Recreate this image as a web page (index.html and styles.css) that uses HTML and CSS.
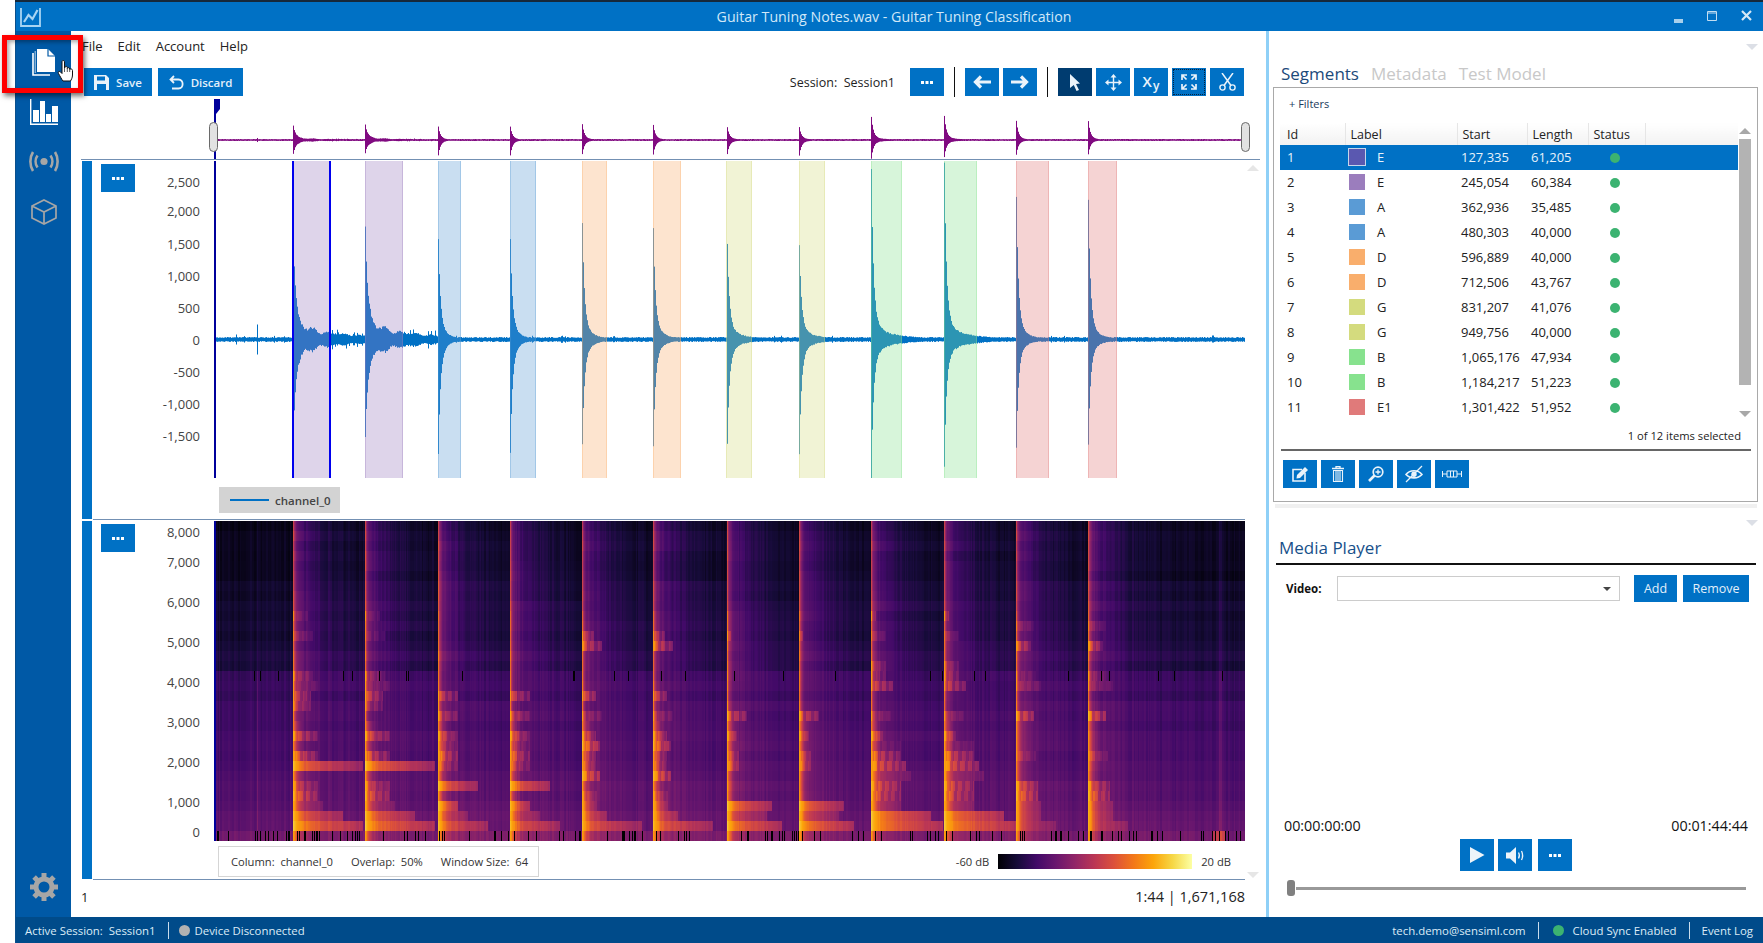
FILE: index.html
```html
<!DOCTYPE html>
<html lang="en">
<head>
<meta charset="utf-8">
<title>Guitar Tuning Notes.wav - Guitar Tuning Classification</title>
<link rel="stylesheet" href="styles.css">
</head>
<body>
<div class="topstrip"></div>
<div class="window">
  <header class="titlebar">
    <svg class="logo" width="21" height="20" viewBox="0 0 21 20"><path d="M1 1V19H20V1" fill="none" stroke="#a8d4f2" stroke-width="1.800"/><path d="M4 15L8.500 8L12.500 12L17.500 3" fill="none" stroke="#a8d4f2" stroke-width="2.200"/></svg>
    <div class="title">Guitar Tuning Notes.wav - Guitar Tuning Classification</div>
    <div class="winbtns">
      <svg width="9" height="4" viewBox="0 0 9 4"><rect width="9" height="4" fill="#a9d0ec"/></svg>
      <svg width="10" height="10" viewBox="0 0 10 10"><path d="M.5 .5H9.500V9.500H.5Z M.5 2H9.500" fill="none" stroke="#c3def2" stroke-width="1"/></svg>
      <svg width="11" height="11" viewBox="0 0 11 11"><path d="M1 1L10 10M10 1L1 10" stroke="#d5e8f6" stroke-width="2.200"/></svg>
    </div>
  </header>

  <div class="middle">
    <nav class="sidebar">
      <svg class="nav-file" width="24" height="28" viewBox="0 0 24 28"><path d="M1 5V27H18" fill="none" stroke="#fff" stroke-width="1.600"/><path d="M5 1H16L23 8V24H5Z" fill="#fff"/><path d="M16 1V8H23" fill="none" stroke="#0059a6" stroke-width="1.200"/><path d="M3.200 3V25" stroke="#bcd7ee" stroke-width="1"/></svg>
      <svg class="nav-chart" width="28" height="26" viewBox="0 0 28 26"><path d="M.7 0V25.200H28" fill="none" stroke="#fff" stroke-width="1.400"/><path d="M3 11H9V23H3ZM10 2H15V23H10ZM16 15H21V23H16ZM22 7H28V23H22Z" fill="#fff"/></svg>
      <svg class="nav-signal" width="30" height="23" viewBox="0 0 30 23"><circle cx="15" cy="11.500" r="3.600" fill="#a6a6a6"/><path d="M8.500 5.500C6 9 6 14 8.500 17.500M21.500 5.500C24 9 24 14 21.500 17.500M4 2C.5 7.500 .5 15.500 4 21M26 2C29.500 7.500 29.500 15.500 26 21" fill="none" stroke="#a6a6a6" stroke-width="2.600"/></svg>
      <svg class="nav-cube" width="26" height="26" viewBox="0 0 26 26"><path d="M13 1L25 7V19L13 25L1 19V7ZM1 7L13 13L25 7M13 13V25" fill="none" stroke="#a6a6a6" stroke-width="1.700"/></svg>
      <svg class="nav-gear" width="28" height="28" viewBox="-14 -14 28 28">
        <circle r="8" fill="none" stroke="#a6a6a6" stroke-width="5"/>
        <g fill="#a6a6a6"><rect x="-2.500" y="-14" width="5" height="5"/><rect x="-2.500" y="-14" width="5" height="5" transform="rotate(45)"/><rect x="-2.500" y="-14" width="5" height="5" transform="rotate(90)"/><rect x="-2.500" y="-14" width="5" height="5" transform="rotate(135)"/><rect x="-2.500" y="-14" width="5" height="5" transform="rotate(180)"/><rect x="-2.500" y="-14" width="5" height="5" transform="rotate(225)"/><rect x="-2.500" y="-14" width="5" height="5" transform="rotate(270)"/><rect x="-2.500" y="-14" width="5" height="5" transform="rotate(315)"/></g>
      </svg>
    </nav>

    <main class="main">
      <div class="menu"><span>File</span><span>Edit</span><span>Account</span><span>Help</span></div>

      <div class="toolbar">
        <button class="btn btn-text"><svg width="15" height="15" viewBox="0 0 15 15"><path fill-rule="evenodd" d="M0 0H12L15 3V15H0ZM3 1.500V5.500H11V1.500ZM3 9V15H12V9Z" fill="#eaf3fa"/></svg>Save</button>
        <button class="btn btn-text btn-discard"><svg width="15" height="15" viewBox="0 0 15 15"><path d="M5 1L1.500 4.500L5 8M1.500 4.500H9.500C15 4.500 15 13.500 9.500 13.500H3" fill="none" stroke="#eaf3fa" stroke-width="1.800"/></svg>Discard</button>
        <div class="session">Session:&nbsp; Session1</div>
        <button class="btn"><svg width="12" height="3" viewBox="0 0 12 3"><path d="M0 0H3V3H0ZM4.500 0H7.500V3H4.500ZM9 0H12V3H9Z" fill="#fff"/></svg></button>
        <div class="vsep"></div>
        <button class="btn"><svg width="18" height="14" viewBox="0 0 18 14"><path d="M8 1.500L2.500 7L8 12.500M3 7H18" fill="none" stroke="#eaf3fa" stroke-width="3.200"/></svg></button>
        <button class="btn"><svg width="18" height="14" viewBox="0 0 18 14"><path d="M10 1.500L15.500 7L10 12.500M15 7H0" fill="none" stroke="#eaf3fa" stroke-width="3.200"/></svg></button>
        <div class="vsep"></div>
        <button class="btn btn-active"><svg width="10" height="17" viewBox="0 0 10 17"><path d="M0 0L10 9.500L6 10L9 16L6.500 17L3.800 11L0 14Z" fill="#eaf3fa"/></svg></button>
        <button class="btn"><svg width="17" height="17" viewBox="0 0 17 17"><path d="M8.500 2V15M2 8.500H15" stroke="#eaf3fa" stroke-width="1.400"/><path d="M8.500 0L11.500 3.500H5.500ZM8.500 17L11.500 13.500H5.500ZM0 8.500L3.500 5.500V11.500ZM17 8.500L13.500 5.500V11.500Z" fill="#eaf3fa"/></svg></button>
        <button class="btn btn-xy"><span class="xy-x">X</span><span class="xy-y">y</span></button>
        <button class="btn btn-focus"><svg width="16" height="16" viewBox="0 0 16 16"><path d="M1 6V1H6M1 1L5.500 5.500M10 1H15V6M15 1L10.500 5.500M1 10V15H6M1 15L5.500 10.500M15 10V15H10M15 15L10.500 10.500" fill="none" stroke="#eaf3fa" stroke-width="1.700"/></svg></button>
        <button class="btn"><svg width="17" height="18" viewBox="0 0 17 18"><circle cx="3.500" cy="14.500" r="2.600" fill="none" stroke="#eaf3fa" stroke-width="1.400"/><circle cx="13.500" cy="14.500" r="2.600" fill="none" stroke="#eaf3fa" stroke-width="1.400"/><path d="M5 12.500L14 0M12 12.500L3 0" stroke="#eaf3fa" stroke-width="1.500"/></svg></button>
      </div>

      <div class="overview">
        <canvas id="overview" class="overview-canvas" width="1031" height="62"></canvas>
        <div class="handle handle-left"></div>
        <div class="handle handle-right"></div>
      </div>

      <section class="chart chart-wave">
        <div class="chart-bar"></div>
        <div class="chart-body">
          <div class="chart-side">
            <div class="chart-btncol"><button class="btn"><svg width="12" height="3" viewBox="0 0 12 3"><path d="M0 0H3V3H0ZM4.500 0H7.500V3H4.500ZM9 0H12V3H9Z" fill="#fff"/></svg></button></div>
            <div class="axis axis-wave">
              <div class="tick">2,500</div><div class="tick">2,000</div><div class="tick">1,500</div><div class="tick">1,000</div><div class="tick">500</div><div class="tick">0</div><div class="tick">-500</div><div class="tick">-1,000</div><div class="tick">-1,500</div>
            </div>
          </div>
          <div class="plot">
            <canvas id="wave" class="wave-canvas" width="1031" height="317"></canvas>
            <div class="legend"><span class="legend-line"></span>channel_0</div>
          </div>
        </div>
      </section>

      <section class="chart chart-spec">
        <div class="chart-bar"></div>
        <div class="chart-body">
          <div class="chart-side">
            <div class="chart-btncol"><button class="btn"><svg width="12" height="3" viewBox="0 0 12 3"><path d="M0 0H3V3H0ZM4.500 0H7.500V3H4.500ZM9 0H12V3H9Z" fill="#fff"/></svg></button></div>
            <div class="axis axis-spec">
              <div class="tick">8,000</div><div class="tick">7,000</div><div class="tick">6,000</div><div class="tick">5,000</div><div class="tick">4,000</div><div class="tick">3,000</div><div class="tick">2,000</div><div class="tick">1,000</div><div class="tick">0</div>
            </div>
          </div>
          <div class="plot">
            <canvas id="spec" class="spec-canvas" width="1031" height="320"></canvas>
            <div class="spec-foot">
              <div class="infobox"><span>Column:&nbsp; channel_0</span><span>Overlap:&nbsp; 50%</span><span>Window Size:&nbsp; 64</span></div>
              <div class="scale"><span>-60 dB</span><div class="scale-bar"></div><span>20 dB</span></div>
            </div>
          </div>
        </div>
      </section>

      <footer class="main-foot"><span>1</span><span>1:44 | 1,671,168</span></footer>
      <div class="tri tri-up tri-chart-top"></div>
      <div class="tri tri-down tri-chart-bottom"></div>
    </main>

    <div class="vsplit"></div>

    <aside class="right">
      <div class="tri tri-down tri-right-top"></div>
      <div class="tabs"><span class="tab-on">Segments</span><span>Metadata</span><span>Test Model</span></div>
      <div class="box">
        <div class="filters">+ Filters</div>
        <div class="table-wrap">
          <table class="segs">
            <thead><tr><th>Id</th><th>Label</th><th>Start</th><th>Length</th><th>Status</th><th></th></tr></thead>
            <tbody>
              <tr class="selected"><td>1</td><td><span class="sw sw-e1"></span>E</td><td>127,335</td><td>61,205</td><td><span class="dot"></span></td><td></td></tr>
              <tr><td>2</td><td><span class="sw sw-e"></span>E</td><td>245,054</td><td>60,384</td><td><span class="dot"></span></td><td></td></tr>
              <tr><td>3</td><td><span class="sw sw-a"></span>A</td><td>362,936</td><td>35,485</td><td><span class="dot"></span></td><td></td></tr>
              <tr><td>4</td><td><span class="sw sw-a"></span>A</td><td>480,303</td><td>40,000</td><td><span class="dot"></span></td><td></td></tr>
              <tr><td>5</td><td><span class="sw sw-d"></span>D</td><td>596,889</td><td>40,000</td><td><span class="dot"></span></td><td></td></tr>
              <tr><td>6</td><td><span class="sw sw-d"></span>D</td><td>712,506</td><td>43,767</td><td><span class="dot"></span></td><td></td></tr>
              <tr><td>7</td><td><span class="sw sw-g"></span>G</td><td>831,207</td><td>41,076</td><td><span class="dot"></span></td><td></td></tr>
              <tr><td>8</td><td><span class="sw sw-g"></span>G</td><td>949,756</td><td>40,000</td><td><span class="dot"></span></td><td></td></tr>
              <tr><td>9</td><td><span class="sw sw-b"></span>B</td><td>1,065,176</td><td>47,934</td><td><span class="dot"></span></td><td></td></tr>
              <tr><td>10</td><td><span class="sw sw-b"></span>B</td><td>1,184,217</td><td>51,223</td><td><span class="dot"></span></td><td></td></tr>
              <tr><td>11</td><td><span class="sw sw-r"></span>E1</td><td>1,301,422</td><td>51,952</td><td><span class="dot"></span></td><td></td></tr>
            </tbody>
          </table>
          <div class="vscroll"><div class="sb-up"></div><div class="sb-thumb"></div><div class="sb-down"></div></div>
        </div>
        <div class="count">1 of 12 items selected</div>
        <div class="rule-grey"></div>
        <div class="actions">
          <button class="btn"><svg width="16" height="15" viewBox="0 0 16 15"><path d="M10 2.500H1V14H13V6" fill="none" stroke="#eaf3fa" stroke-width="1.600"/><path d="M5 8L13 0L16 3L8 11L4.500 11.500Z" fill="#eaf3fa"/></svg></button>
          <button class="btn"><svg width="12" height="16" viewBox="0 0 12 16"><path d="M0 2.500H12M4 2.500V.7H8V2.500" fill="none" stroke="#eaf3fa" stroke-width="1.300"/><path d="M1.500 4.500H10.500V15.500H1.500ZM4 4.500V15.500M6 4.500V15.500M8 4.500V15.500" fill="none" stroke="#eaf3fa" stroke-width="1.100"/></svg></button>
          <button class="btn"><svg width="16" height="16" viewBox="0 0 16 16"><circle cx="10" cy="6" r="4.800" fill="none" stroke="#eaf3fa" stroke-width="1.700"/><path d="M6.500 9.500L1 15" stroke="#eaf3fa" stroke-width="2.600"/><path d="M10 3.500V8.500M7.500 6H12.500" stroke="#eaf3fa" stroke-width="1.300"/></svg></button>
          <button class="btn"><svg width="18" height="18" viewBox="0 0 18 18"><path d="M1 9.500C5 4.500 13 4.500 17 9.500C13 14 5 14 1 9.500Z" fill="none" stroke="#eaf3fa" stroke-width="1.600"/><circle cx="9" cy="9.300" r="2.700" fill="#eaf3fa"/><path d="M1 17L17 1" stroke="#eaf3fa" stroke-width="1.300"/></svg></button>
          <button class="btn"><svg width="20" height="8" viewBox="0 0 20 8"><path d="M.5 1V7M.5 4H5M5 1H15V7H5ZM8.500 1V7M11.500 1V7M15 4H19.500M19.500 1V7" fill="none" stroke="#eaf3fa" stroke-width="1"/></svg></button>
        </div>
      </div>
      <div class="hsplit"></div>

      <div class="media">
        <div class="tri tri-down tri-media"></div>
        <div class="media-title">Media Player</div>
        <div class="rule-black"></div>
        <div class="video-row">
          <label class="video-label">Video:</label>
          <div class="combo"><span class="combo-arrow"></span></div>
          <button class="btn btn-add">Add</button>
          <button class="btn btn-remove">Remove</button>
        </div>
        <div class="times"><span>00:00:00:00</span><span>00:01:44:44</span></div>
        <div class="controls">
          <button class="btn btn-tall"><svg width="15" height="16" viewBox="0 0 15 16"><path d="M0 0L14.500 8L0 16Z" fill="#eef4f9"/></svg></button>
          <button class="btn btn-tall"><svg width="19" height="17" viewBox="0 0 19 17"><path d="M0 5.500H4L10 0V17L4 11.500H0Z" fill="#eef4f9"/><path d="M12.500 5.500C13.700 7.500 13.700 9.500 12.500 11.500M15.500 4C17 7 17 10 15.500 13" fill="none" stroke="#eef4f9" stroke-width="1.300"/></svg></button>
          <button class="btn btn-tall btn-more"><svg width="12" height="3" viewBox="0 0 12 3"><path d="M0 0H3V3H0ZM4.500 0H7.500V3H4.500ZM9 0H12V3H9Z" fill="#fff"/></svg></button>
        </div>
        <div class="slider"><div class="slider-thumb"></div><div class="slider-track"></div></div>
      </div>
    </aside>
  </div>

  <footer class="statusbar">
    <span>Active Session:&nbsp; Session1</span>
    <i class="sb-sep"></i>
    <i class="sb-dot sb-dot-grey"></i>
    <span>Device Disconnected</span>
    <span class="sb-right">tech.demo@sensiml.com</span>
    <i class="sb-sep"></i>
    <i class="sb-dot sb-dot-green"></i>
    <span>Cloud Sync Enabled</span>
    <i class="sb-sep sb-sep-last"></i>
    <span>Event Log</span>
  </footer>
</div>

<div class="callout"></div>
<svg class="hand" width="17" height="22" viewBox="0 0 17 22"><path d="M5 1.500C5 .3 7.500 .3 7.500 1.500V8L8 7.300C8.500 6 10 6 10.300 7.500V8.500C10.800 7.200 12.500 7.500 12.700 9V9.500C13.300 8.500 15.500 8.800 15.500 10.500V15C15.500 18 14 20 13.500 21H6C5 20 3 16 1.500 13.500C.7 12 2 10.800 3.200 11.700L5 13.500Z" fill="#fff" stroke="#111" stroke-width="1"/><path d="M7.500 8V12M10.300 8.500V12M12.700 9.500V12" stroke="#111" stroke-width=".7"/></svg>
<script src="app.js"></script>
</body>
</html>
```

FILE: styles.css
```css
* { box-sizing: border-box; }
html, body { margin: 0; height: 943px; overflow: hidden; background: #fff; }
body { position: relative; font-family: "Open Sans", "Noto Sans", sans-serif; font-size: 13px; color: #1c1c1c; }
button { font-family: inherit; border: 0; padding: 0; margin: 0; }
canvas { display: block; }

.topstrip { height: 2px; margin-left: 15px; background: #16283a; }
.window { margin-left: 15px; height: 941px; display: flex; flex-direction: column; border-left: 1px solid #0a4f8c; }

.titlebar { height: 29px; flex: none; background: #0071c5; display: flex; align-items: center; padding-left: 4px; position: relative; }
.logo { flex: none; }
.title { flex: 1; text-align: center; padding-left: 84px; font-size: 14.200px; color: #d2e8f8; }
.winbtns { flex: none; width: 100px; display: flex; justify-content: flex-end; align-items: center; gap: 24px; padding-right: 11px; }
.winbtns svg:first-child { margin-top: 8px; }
.winbtns svg:nth-child(2) { margin-top: -2px; }
.winbtns svg:last-child { margin-top: -2px; }

.middle { flex: 1; display: flex; min-height: 0; }
.sidebar { width: 55px; flex: none; background: #0059a6; display: flex; flex-direction: column; align-items: center; }
.nav-file { margin-top: 17px; flex: none; }
.nav-chart { margin-top: 23px; flex: none; }
.nav-signal { margin-top: 25px; flex: none; }
.nav-cube { margin-top: 26px; flex: none; }
.nav-gear { margin-top: auto; margin-bottom: 16px; flex: none; }

.main { flex: 1; min-width: 0; position: relative; padding-left: 10px; display: flex; flex-direction: column; background: #fff; }
.menu { height: 37px; flex: none; padding: 5px 0 0 1px; display: flex; gap: 15px; line-height: 20px; color: #222; }

.btn { display: flex; align-items: center; justify-content: center; width: 34px; height: 28px; flex: none; background: #0071c5; color: #e4f0fa; }
.toolbar { height: 28px; flex: none; margin: 0 22px 0 3px; display: flex; align-items: center; gap: 4px; }
.btn-text { width: 68px; gap: 7px; font-size: 11.500px; font-weight: 600; }
.btn-discard { width: 85px; margin-left: 2px; }
.session { margin-left: auto; margin-right: 11px; font-size: 12.500px; color: #222; }
.vsep { width: 1px; height: 30px; background: #111; margin: 0 6px; }
.btn-active { background: #003c70; }
.btn-xy { align-items: baseline; padding-top: 3px; color: #eaf3fa; font-weight: 600; }
.xy-x { font-size: 15px; }
.xy-y { font-size: 12px; margin-left: 1px; position: relative; top: 3px; }
.btn-focus { outline: 1px dotted #06233f; outline-offset: -2px; }

.overview { height: 64px; flex: none; position: relative; margin-right: 6px; border-bottom: 1px solid #7390b3; padding-left: 133px; }
.overview-canvas { margin-top: 1px; }
.handle { position: absolute; top: 26px; width: 9px; height: 30px; background: #e2e2e2; border: 1px solid #6a6a6a; border-radius: 5px; }
.handle-left { left: 128px; }
.handle-right { left: 1160px; }

.chart { display: flex; flex: none; }
.chart-bar { width: 10px; height: 358px; margin-left: 1px; background: #0071c5; flex: none; }
.chart-body { width: 1152px; margin-left: 1px; display: flex; flex: none; }
.chart-side { width: 121px; flex: none; display: flex; }
.chart-btncol { width: 50px; flex: none; padding-left: 8px; }
.axis { flex: 1; display: flex; flex-direction: column; align-items: flex-end; padding-right: 14px; font-size: 13px; color: #444; }
.tick { line-height: 20px; height: 20px; }
.plot { width: 1031px; flex: none; }

.chart-wave { height: 359px; }
.chart-wave .chart-bar { margin-top: 1px; }
.chart-wave .chart-btncol { padding-top: 4px; }
.axis-wave { padding-top: 12px; }
.axis-wave .tick { margin-top: 12px; }
.axis-wave .tick:first-child { margin-top: 0; }
.axis-wave .tick:nth-child(2) { margin-top: 9px; }
.axis-wave .tick:nth-child(3) { margin-top: 13px; }
.wave-canvas { margin-top: 1px; }
.legend { margin: 9px 0 0 5px; width: 121px; height: 26px; background: #d3d3d3; display: flex; align-items: center; padding-left: 11px; gap: 6px; font-size: 11.500px; font-weight: 600; color: #444; }
.legend-line { width: 39px; height: 2px; background: #0071c5; flex: none; }

.chart-spec { height: 361px; }
.chart-spec .chart-bar { margin-top: 2px; }
.chart-spec .chart-body { border-top: 1px solid #7390b3; border-bottom: 1px solid #7390b3; }
.chart-spec .chart-btncol { padding-top: 4px; }
.axis-spec { padding-top: 2px; }
.axis-spec .tick { margin-top: 20px; }
.axis-spec .tick:first-child { margin-top: 0; }
.axis-spec .tick:nth-child(2), .axis-spec .tick:last-child { margin-top: 10px; }
.spec-canvas { margin-top: 1px; }
.spec-foot { display: flex; align-items: flex-start; margin-top: 5px; padding: 0 14px 0 4px; justify-content: space-between; }
.infobox { width: 321px; height: 31px; border: 1px solid #d5d5d5; display: flex; align-items: center; padding-left: 12px; gap: 18px; font-size: 11.200px; color: #333; white-space: nowrap; }
.scale { display: flex; align-items: center; gap: 9px; margin-top: 8px; font-size: 11.200px; color: #333; }
.scale-bar { width: 194px; height: 15px; background: linear-gradient(to right, #000004, #160b39, #420a68, #6a176e, #932667, #bc3754, #dd513a, #f37819, #fca50a, #f6d746, #fcffa4); }

.main-foot { flex: 1; display: flex; justify-content: space-between; padding: 7px 21px 0 0; font-size: 14.500px; line-height: 20px; color: #222; }
.main-foot span:first-child { font-size: 13px; }

.tri { position: absolute; width: 0; height: 0; border-left: 6px solid transparent; border-right: 6px solid transparent; }
.tri-up { border-bottom: 6px solid #e6e6e6; }
.tri-down { border-top: 6px solid #dcdfe6; }
.tri-chart-top { left: 1176px; top: 134px; }
.tri-chart-bottom { left: 1176px; top: 841px; border-top-color: #e6e6e6; }

.vsplit { width: 3px; flex: none; background: #8fd0f7; }
.right { width: 494px; flex: none; position: relative; display: flex; flex-direction: column; background: #fff; }
.tri-right-top { left: 477px; top: 13px; }
.tabs { padding: 31px 0 0 12px; height: 54px; flex: none; margin-bottom: 2px; display: flex; gap: 12px; font-size: 17px; line-height: 23px; color: #c8c8c8; }
.tab-on { color: #1c4a7a; }

.box { margin: 0 5px 0 4px; height: 415px; flex: none; border: 1px solid #a9a9a9; padding: 0 6px; }
.filters { height: 35px; padding: 8px 0 0 9px; font-size: 11px; line-height: 15px; color: #1a3a5c; }
.table-wrap { height: 297px; display: flex; gap: 1px; }
.segs { width: 458px; flex: none; table-layout: fixed; border-collapse: collapse; font-size: 13px; }
.segs th { height: 22px; padding: 0 0 0 5px; font-weight: 400; text-align: left; color: #222; background: linear-gradient(#fff, #f2f2f2); border-right: 1px solid #e6e6e6; font-size: 12.500px; }
.segs th:nth-child(1) { width: 65px; padding-left: 7px; }
.segs th:nth-child(2) { width: 112px; }
.segs th:nth-child(3) { width: 70px; }
.segs th:nth-child(4) { width: 61px; }
.segs th:nth-child(5) { width: 57px; }
.segs th:last-child { border-right: 0; }
.segs td { height: 25px; padding: 0 0 2px 4px; white-space: nowrap; color: #222; }
.segs td:first-child { padding-left: 7px; }
.segs td:nth-child(2) { padding-left: 4px; }
.segs td:nth-child(5) { padding-left: 22px; }
.selected td { background: #0071c5; color: #e8f2fa; }
.sw { display: inline-block; width: 16px; height: 16px; margin-right: 12px; vertical-align: -3px; }
.sw-e1 { background: #5a58b0; outline: 1px solid #c6d6ea; }
.sw-e { background: #9b7dbd; }
.sw-a { background: #5a9bd5; }
.sw-d { background: #f9ae6c; }
.sw-g { background: #d4db7e; }
.sw-b { background: #87e28e; }
.sw-r { background: #e07a7a; }
.dot { display: inline-block; width: 10px; height: 10px; border-radius: 50%; background: #3cb371; vertical-align: middle; }
.vscroll { width: 12px; flex: none; display: flex; flex-direction: column; padding: 5px 0 3px; }
.sb-up { border-left: 6px solid transparent; border-right: 6px solid transparent; border-bottom: 6px solid #a8a8a8; }
.sb-thumb { height: 246px; margin-top: 5px; background: #b3b3b3; }
.sb-down { margin-top: auto; border-left: 6px solid transparent; border-right: 6px solid transparent; border-top: 6px solid #a8a8a8; }
.count { margin-top: 6px; padding-right: 10px; height: 20px; text-align: right; font-size: 11.200px; line-height: 20px; color: #222; }
.rule-grey { margin: 3px 0 0 1px; height: 2px; background: #666; }
.actions { margin: 9px 0 0 3px; display: flex; gap: 4px; }

.hsplit { margin: 2px 6px 0 6px; height: 4px; flex: none; background: #f0f0f0; }

.media { flex: 1; position: relative; min-height: 0; padding: 28px 7px 21px; display: flex; flex-direction: column; }
.tri-media { left: 477px; top: 12px; }
.media-title { padding-left: 3px; font-size: 17px; line-height: 24px; color: #17508a; }
.rule-black { margin-top: 3px; height: 2px; background: #111; flex: none; }
.video-row { margin-top: 10px; height: 27px; display: flex; align-items: center; flex: none; }
.video-label { margin-left: 10px; width: 51px; font-size: 11.500px; font-weight: 700; color: #111; }
.combo { width: 283px; height: 25px; border: 1px solid #ccc; position: relative; display: flex; align-items: center; justify-content: flex-end; padding-right: 8px; }
.combo-arrow { border-left: 4px solid transparent; border-right: 4px solid transparent; border-top: 4px solid #444; }
.btn-add { width: 43px; height: 27px; margin-left: 14px; font-size: 12.500px; font-weight: 500; }
.btn-remove { width: 66px; height: 27px; margin-left: 6px; font-size: 12.500px; font-weight: 500; }
.times { margin-top: auto; height: 20px; padding: 0 8px 0 8px; display: flex; justify-content: space-between; font-size: 14.300px; line-height: 20px; color: #111; flex: none; }
.controls { margin: 3px 0 0 184px; display: flex; gap: 4px; flex: none; }
.btn-tall { height: 32px; }
.btn-more { margin-left: 2px; }
.slider { margin: 9px 10px 0 11px; height: 16px; display: flex; align-items: center; gap: 1px; flex: none; }
.slider-thumb { width: 8px; height: 16px; background: #808080; border-radius: 3px; flex: none; }
.slider-track { flex: 1; height: 3px; background: #999; }

.statusbar { height: 26px; flex: none; background: #004b8a; color: #dcebf7; font-size: 11.400px; display: flex; align-items: center; padding: 0 10px 0 9px; white-space: nowrap; }
.sb-sep { width: 1px; height: 17px; background: #c8dcec; margin: 0 8px 0 12px; flex: none; }
.sb-sep-last { margin-right: 12px; }
.sb-dot { width: 11px; height: 11px; border-radius: 50%; margin: 0 5px 0 2px; flex: none; }
.sb-dot-grey { background: #b2b2b2; }
.sb-dot-green { background: #3cb371; margin: 0 9px 0 6px; }
.sb-right { margin-left: auto; }

.callout { position: absolute; left: 2px; top: 35px; width: 81px; height: 58px; border: 5px solid #f00; box-shadow: 2px 3px 5px rgba(0,0,0,.55), inset 2px 2px 4px rgba(0,0,0,.35); }
.hand { position: absolute; left: 57px; top: 60px; }
```

FILE: app.js
```js
(function () {
  function rng(seed) {
    return function () {
      seed |= 0; seed = seed + 0x6D2B79F5 | 0;
      var t = Math.imul(seed ^ seed >>> 15, 1 | seed);
      t = t + Math.imul(t ^ t >>> 7, 61 | t) ^ t;
      return ((t ^ t >>> 14) >>> 0) / 4294967296;
    };
  }
  var X0 = 214, W = 1031;
  var NOTES = [
    { x: 293, up: 91, dn: 89, t: 'E', body: 15, tau: 42, tail: 5 },
    { x: 365, up: 99, dn: 82, t: 'E', body: 16, tau: 42, tail: 5 },
    { x: 438, up: 94, dn: 108, t: 'A', body: 6, tau: 14, tail: 1 },
    { x: 510, up: 94, dn: 108, t: 'A', body: 6, tau: 14, tail: 1 },
    { x: 582, up: 110, dn: 98, t: 'D', body: 7, tau: 16, tail: 1 },
    { x: 653, up: 104, dn: 100, t: 'D', body: 7, tau: 16, tail: 1 },
    { x: 727, up: 88, dn: 97, t: 'G', body: 7, tau: 24, tail: 1 },
    { x: 799, up: 88, dn: 108, t: 'G', body: 7, tau: 24, tail: 1 },
    { x: 871, up: 161, dn: 128, t: 'B', body: 10, tau: 32, tail: 1 },
    { x: 944, up: 168, dn: 117, t: 'B', body: 10, tau: 32, tail: 1 },
    { x: 1016, up: 136, dn: 103, t: 'R', body: 6, tau: 18, tail: 1 },
    { x: 1088, up: 134, dn: 100, t: 'R', body: 6, tau: 18, tail: 1 }
  ];
  var SEGS = [
    [293, 330, '155,125,190'], [365, 403, '155,125,190'],
    [438, 461, '90,155,213'], [510, 536, '90,155,213'],
    [582, 607, '249,174,108'], [653, 681, '249,174,108'],
    [726, 752, '212,219,126'], [799, 825, '212,219,126'],
    [871, 902, '135,226,142'], [944, 977, '135,226,142'],
    [1016, 1049, '224,122,122'], [1088, 1117, '224,122,122']
  ];
  function noteAt(x) {
    var n = null, i = 0;
    for (i = 0; i < NOTES.length; i++) { if (x >= NOTES[i].x) n = NOTES[i]; }
    return n;
  }
  function sample(x, r) {
    var u = 1.6 + r() * 0.9, d = 1.6 + r() * 0.9, n = noteAt(x);
    if (x === 236) { u = 5; d = 5; }
    if (x === 257) { u = 15; d = 15; }
    if (x === 1212 || x === 1213) { u = 4; d = 3; }
    if (r() < 0.04) { u += 1.5; d += 1; }
    if (n) {
      var dx = x - n.x;
      var s = 0.86 * Math.exp(-dx / 2) + 0.14 * Math.exp(-dx / 5.5);
      var wav = n.t === 'E' ? 1 + 0.22 * Math.sin(dx * 0.4) : 1;
      var bu = n.body * Math.exp(-dx / n.tau) * wav * (0.85 + 0.25 * r());
      var bd = n.body * Math.exp(-dx / n.tau) * wav * (0.85 + 0.25 * r());
      u = Math.max(u, n.up * s + bu);
      d = Math.max(d, n.dn * s + bd);
      if (n.tail > 1 && dx > 38 && dx < 75) {
        u += 0.8; d += 0.8;
        if (r() < 0.3) { u += r() * n.tail; d += r() * n.tail; }
      }
    }
    return [u, d];
  }

  // main waveform
  var wave = document.getElementById('wave').getContext('2d');
  var r1 = rng(11), c1 = 178.5, i;
  wave.fillStyle = '#0071c5';
  for (i = 2; i < W; i++) {
    var s1 = sample(i + X0, r1);
    wave.fillRect(i, c1 - s1[0], 1, s1[0] + s1[1]);
  }
  SEGS.forEach(function (s) {
    var a = s[0] - X0, b = s[1] - X0;
    wave.fillStyle = 'rgba(' + s[2] + ',.33)';
    wave.fillRect(a, 0, b - a, 317);
    wave.fillStyle = 'rgba(' + s[2] + ',.35)';
    wave.fillRect(a, 0, 1, 317);
    wave.fillRect(b - 1, 0, 1, 317);
  });
  wave.fillStyle = '#00009b';
  wave.fillRect(0, 0, 2, 317);
  wave.fillStyle = '#0000ee';
  wave.fillRect(292 - X0, 0, 2, 317);
  wave.fillRect(329 - X0, 0, 2, 317);

  // overview
  var ov = document.getElementById('overview').getContext('2d');
  var r2 = rng(23), c2 = 43;
  ov.fillStyle = '#800a80';
  for (i = 2; i < W; i++) {
    var s2 = sample(i + X0, r2);
    var up = Math.max(0.7 + r2() * 0.3, s2[0] * 0.135), dn = Math.max(0.7 + r2() * 0.3, s2[1] * 0.135);
    ov.fillRect(i, c2 - up, 1, up + dn);
  }
  ov.fillStyle = '#00009b';
  ov.fillRect(0, 2, 2, 60);
  ov.beginPath();
  ov.moveTo(0, 2); ov.lineTo(6, 2); ov.lineTo(6, 12); ov.lineTo(2, 17); ov.lineTo(0, 17);
  ov.closePath(); ov.fill();

  // spectrogram
  var STOPS = [[0, 0, 4], [22, 11, 57], [66, 10, 104], [106, 23, 110], [147, 38, 103], [188, 55, 84], [221, 81, 58], [243, 120, 25], [252, 165, 10], [246, 215, 70], [252, 255, 164]];
  function cmap(v) {
    v = Math.max(0, Math.min(0.999, v)) * 10;
    var a = Math.floor(v), f = v - a, p = STOPS[a], q = STOPS[a + 1];
    return 'rgb(' + Math.round(p[0] + (q[0] - p[0]) * f) + ',' + Math.round(p[1] + (q[1] - p[1]) * f) + ',' + Math.round(p[2] + (q[2] - p[2]) * f) + ')';
  }
  var H = {
    E: { 9: [.1, 15], 11: [.1, 20], 15: [.16, 20], 16: [.1, 25], 17: [.24, 18], 18: [.16, 18], 21: [.2, 25], 23: [.24, 25], 24: [.36, 70], 26: [.16, 25], 27: [.24, 25], 28: [.12, 30], 29: [.26, 50], 30: [.34, 70] },
    A: { 17: [.24, 20], 19: [.16, 20], 21: [.2, 20], 22: [.12, 20], 23: [.24, 20], 24: [.16, 20], 26: [.3, 40], 28: [.28, 20], 29: [.16, 30], 30: [.26, 50] },
    D: { 11: [.2, 12], 12: [.28, 20], 17: [.24, 14], 19: [.12, 20], 21: [.2, 14], 22: [.3, 18], 23: [.16, 14], 24: [.16, 14], 25: [.3, 18], 27: [.12, 15], 28: [.16, 15], 29: [.2, 25], 30: [.26, 60] },
    G: { 11: [.16, 4], 19: [.26, 20], 21: [.16, 10], 23: [.16, 12], 24: [.16, 12], 28: [.3, 45], 29: [.18, 40], 30: [.32, 55] },
    B: { 9: [.16, 5], 11: [.1, 15], 14: [.12, 15], 15: [.16, 15], 16: [.26, 22], 19: [.1, 20], 21: [.2, 12], 22: [.08, 30], 23: [.26, 30], 24: [.3, 35], 25: [.12, 40], 26: [.26, 30], 27: [.24, 30], 28: [.16, 30], 29: [.34, 60], 30: [.36, 72] },
    R: { 10: [.1, 18], 12: [.24, 15], 15: [.12, 20], 16: [.12, 25], 19: [.3, 18], 23: [.12, 20], 26: [.2, 22], 27: [.26, 22], 28: [.16, 25], 29: [.16, 25], 30: [.14, 40] }
  };
  var sp = document.getElementById('spec').getContext('2d');
  var r3 = rng(37), x, k;
  var rowJit = NOTES.map(function () {
    var a = [];
    for (k = 0; k < 32; k++) a.push((r3() - 0.5) * 0.06);
    return a;
  });
  var rowBase = [];
  for (k = 0; k < 32; k++) rowBase.push((r3() - 0.5) * 0.025);
  var col = 0;
  for (x = 0; x < W; x++) {
    var ax = x + X0, n = noteAt(ax), ni = n ? NOTES.indexOf(n) : -1, dx = n ? ax - n.x : 999;
    if (x % 2 === 0 || r3() < 0.4) col = (r3() - 0.5) * 0.07;
    for (k = 0; k < 32; k++) {
      var base = k < 13 ? 0.04 + 0.06 * (k / 13) : k < 15 ? 0.11 : 0.16 + 0.11 * ((k - 15) / 16);
      if (k === 31) base = 0.33;
      var v = base + rowBase[k] + col * (0.6 + 0.05 * (k % 4));
      if (n) {
        var dec = Math.exp(-dx / 28);
        var sus = k < 15 ? 0.22 : k < 23 ? 0.13 : 0.12;
        v += sus * dec;
        var a = k < 9 ? 0.24 : k < 15 ? 0.3 : k < 20 ? 0.34 : 0.36;
        v += a * Math.exp(-dx / (k >= 20 ? 3.4 : 1.4)) + 0.05 * Math.exp(-dx / 6);
        v += rowJit[ni][k] * Math.max(dec, 0.35);
        var h = H[n.t][k];
        if (h) {
          var f = 1 - dx / h[1];
          if (f > 0) {
            var strip = (h[1] < 40 && k < 28) ? (Math.sin(dx * 0.85 + k) > -0.2 ? 1 : 0.55) : 1;
            v += h[0] * (0.5 + 0.5 * f) * strip;
          }
        }
      }
      if (Math.abs(ax - 257) < 1) v += k > 14 ? 0.09 : 0.04;
      if (ax >= 1219 && ax <= 1221) v += k > 14 ? 0.07 : 0.05;
      if (k === 31 && ax > 1212 && ax < 1226) v += 0.2;
      if (v > 0.76) v = 0.76 + (v - 0.76) * 0.3;
      var isBlack = (k === 31 && r3() < 0.12) || (k === 15 && r3() < 0.025);
      sp.fillStyle = isBlack ? '#000' : cmap(v);
      sp.fillRect(x, k * 10, 1, 10);
    }
  }
  sp.fillStyle = '#00009b';
  sp.fillRect(0, 0, 2, 320);
})();
```
